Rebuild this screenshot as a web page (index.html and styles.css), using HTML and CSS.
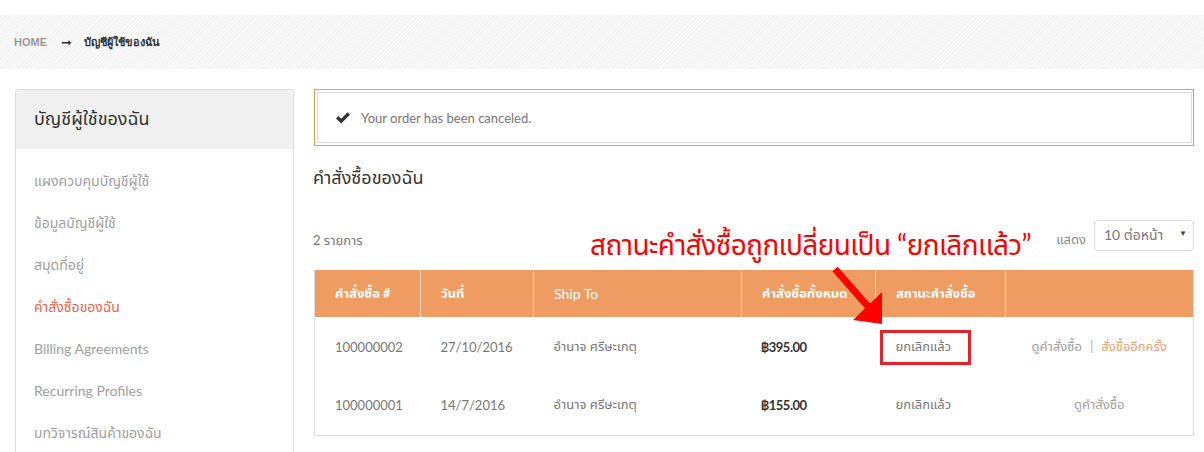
FILE: index.html
```html
<!DOCTYPE html>
<html lang="th">
<head>
<meta charset="utf-8">
<title>บัญชีผู้ใช้ของฉัน</title>
<link rel="stylesheet" href="styles.css">
</head>
<body>
<div class="crumbs">
  <span class="crumb-home">HOME</span>
  <span class="crumb-sep">&#10142;</span>
  <strong class="crumb-cur">บัญชีผู้ใช้ของฉัน</strong>
</div>
<div class="main">
  <aside class="sidebar">
    <div class="side-title">บัญชีผู้ใช้ของฉัน</div>
    <ul class="side-list">
      <li>แผงควบคุมบัญชีผู้ใช้</li>
      <li>ข้อมูลบัญชีผู้ใช้</li>
      <li>สมุดที่อยู่</li>
      <li class="active">คำสั่งซื้อของฉัน</li>
      <li>Billing Agreements</li>
      <li>Recurring Profiles</li>
      <li>บทวิจารณ์สินค้าของฉัน</li>
    </ul>
  </aside>
  <section class="content">
    <div class="msg">
      <div class="msg-inner">
        <svg class="check" width="16" height="14" viewBox="0 0 16 14"><path d="M1 7.5 L3.5 5 L6.2 7.7 L12.5 1.3 L15 3.8 L6.2 12.6 Z" fill="#333"/></svg>
        <span>Your order has been canceled.</span>
      </div>
    </div>
    <h1 class="title">คำสั่งซื้อของฉัน</h1>
    <div class="toolbar">
      <span class="count">2 รายการ</span>
      <div class="limiter">
        <span class="lim-label">แสดง</span>
        <div class="select">10 ต่อหน้า<span class="caret">&#9660;</span></div>
      </div>
    </div>
    <div class="table-wrap">
      <table class="orders">
        <colgroup>
          <col style="width:106px"><col style="width:113px"><col style="width:208px"><col style="width:134px"><col style="width:130px"><col>
        </colgroup>
        <thead>
          <tr>
            <th>คำสั่งซื้อ #</th>
            <th>วันที่</th>
            <th class="light">Ship To</th>
            <th>คำสั่งซื้อทั้งหมด</th>
            <th>สถานะคำสั่งซื้อ</th>
            <th></th>
          </tr>
        </thead>
        <tbody>
          <tr>
            <td>100000002</td>
            <td>27/10/2016</td>
            <td>อำนาจ ศรีษะเกตุ</td>
            <td class="price">฿395.00</td>
            <td><span class="status">ยกเลิกแล้ว</span></td>
            <td class="actions"><span class="view">ดูคำสั่งซื้อ</span><span class="bar">|</span><span class="reorder">สั่งซื้ออีกครั้ง</span></td>
          </tr>
          <tr>
            <td>100000001</td>
            <td>14/7/2016</td>
            <td>อำนาจ ศรีษะเกตุ</td>
            <td class="price">฿155.00</td>
            <td><span class="status">ยกเลิกแล้ว</span></td>
            <td class="actions"><span class="view">ดูคำสั่งซื้อ</span></td>
          </tr>
        </tbody>
      </table>
    </div>
    <div class="note">สถานะคำสั่งซื้อถูกเปลี่ยนเป็น “ยกเลิกแล้ว”</div>
    <svg class="note-arrow" width="70" height="70" viewBox="0 0 70 70"><line x1="5" y1="4" x2="42" y2="46" stroke="#f00" stroke-width="7"/><polygon points="23,55 52,27 52,59" fill="#f00"/></svg>
    <div class="redbox"></div>
  </section>
</div>
</body>
</html>
```
FILE: styles.css
```css
* { box-sizing: border-box; }
html, body { margin: 0; padding: 0; background: #fff; }
body {
  font-family: "Lato", "Noto Sans", "Noto Sans Thai", sans-serif;
  color: #666;
  width: 1204px;
  height: 452px;
  overflow: hidden;
}
.crumbs {
  margin-top: 15px;
  height: 54px;
  display: flex;
  align-items: center;
  padding-left: 14px;
  background: #f5f5f5 repeating-linear-gradient(135deg, rgba(255,255,255,0.6) 0 1px, rgba(0,0,0,0) 1px 3px);
  font-family: "DejaVu Sans", "Liberation Sans", sans-serif;
  font-size: 11px;
}
.crumb-home { color: #999; font-weight: bold; font-family: "Liberation Sans", sans-serif; font-size: 11px; }
.crumb-sep { color: #333; margin: 0 12px 0 14px; font-size: 13px; font-weight: bold; }
.crumb-cur { color: #333; font-weight: bold; }
.main {
  display: flex;
  gap: 20px;
  padding: 20px 11px 0 15px;
}
.sidebar {
  width: 279px;
  flex: none;
  border: 1px solid #ddd;
  border-bottom: 0;
  border-radius: 4px 4px 0 0;
  height: 380px;
}
.side-title {
  height: 59px;
  background: #f0f0f0;
  display: flex;
  align-items: center;
  padding-left: 18px;
  font-size: 18px;
  color: #333;
  border-radius: 4px 4px 0 0;
}
.side-list { list-style: none; margin: 0; padding: 11px 0 0 18px; }
.side-list li { height: 42px; line-height: 42px; font-size: 14px; color: #a0a0a0; }
.side-list li.active { color: #f0604a; }
.content { flex: 1; position: relative; }
.msg { border: 1px solid #f0964e; padding: 2px 1px 2px 2px; height: 57px; }
.msg-inner {
  border: 1px solid #ddd;
  height: 100%;
  display: flex;
  align-items: center;
  padding-left: 17px;
  gap: 10px;
  font-size: 13px;
  color: #777;
}
.check { display: block; }
.title { margin: 19px 0 0 -1px; font-size: 18px; font-weight: normal; color: #333; line-height: 24px; }
.toolbar {
  margin-top: 31px;
  height: 31px;
  display: flex;
  align-items: center;
  justify-content: space-between;
}
.count { font-size: 13px; color: #777; margin-left: -1px; padding-top: 10px; }
.limiter { display: flex; align-items: center; gap: 8px; font-size: 13px; color: #888; }
.lim-label { padding-top: 8px; }
.select {
  width: 100px;
  height: 31px;
  border: 1px solid #ddd;
  border-radius: 3px;
  display: flex;
  align-items: center;
  padding-left: 9px;
  color: #777;
  font-size: 14px;
  position: relative;
}
.caret { position: absolute; right: 6px; top: 7px; font-size: 8px; color: #444; }
.table-wrap { margin-top: 19px; }
.orders { width: 880px; border-collapse: collapse; table-layout: fixed; border: 1px solid #ddd; border-top: 0; }
.orders th {
  background: #ef9c63;
  color: #fff;
  height: 47px;
  text-align: left;
  padding: 0 0 0 20px;
  font-size: 13px;
  font-weight: bold;
  border-left: 1px solid #f7d2b5;
  white-space: nowrap;
  overflow: hidden;
}
.orders th:first-child { border-left: 0; }
.orders th.light { font-weight: normal; font-size: 14px; }
.orders td { height: 59px; padding: 0 0 0 20px; font-size: 13px; color: #777; white-space: nowrap; }
.orders td.price { color: #333; font-weight: bold; letter-spacing: -0.5px; padding-left: 19px; }
.orders td.actions { text-align: center; padding: 0; }
.view { color: #a0a0a0; }
.bar { color: #9fb4c8; margin: 0 8px; }
.reorder { color: #f0a070; }
.note {
  position: absolute;
  left: 276px;
  top: 135px;
  font-size: 28px;
  letter-spacing: -0.6px;
  color: #f00;
  white-space: nowrap;
  line-height: 40px;
}
.note-arrow { position: absolute; left: 516px; top: 176px; }
.redbox {
  position: absolute;
  left: 566px;
  top: 241px;
  width: 91px;
  height: 35px;
  border: 3px solid #e8202a;
}
```
